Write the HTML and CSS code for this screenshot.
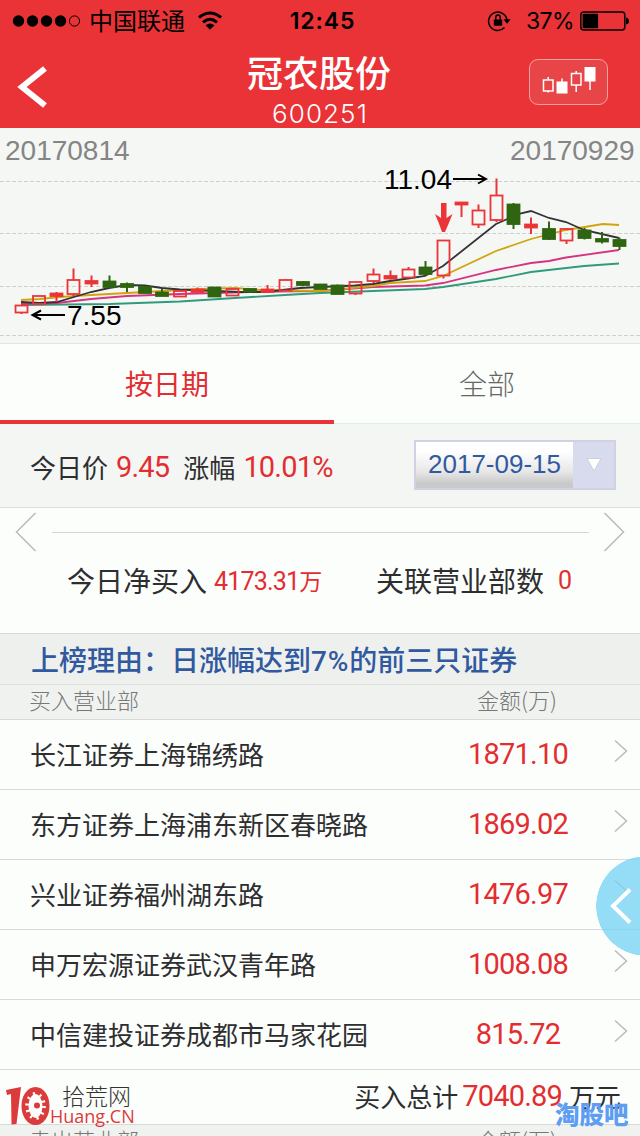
FILE: index.html
```html
<!DOCTYPE html>
<html lang="zh-CN">
  <head>
    <meta charset="UTF-8" />
    <meta name="viewport" content="width=device-width, initial-scale=1.0" />
    <title>冠农股份 600251</title>
    <link rel="stylesheet" href="styles.css">
  </head>
  <body>
    <header class="header">
      <div class="status-bar">
        <div class="carrier">
          <svg class="signal" width="70" height="14" viewBox="0 0 70 14">
            <circle cx="6.5" cy="7" r="5.7" />
            <circle cx="20.5" cy="7" r="5.7" />
            <circle cx="34.5" cy="7" r="5.7" />
            <circle cx="48.5" cy="7" r="5.7" />
            <circle class="empty" cx="62.5" cy="7" r="5.1" />
          </svg>
          <span>中国联通</span>
          <svg class="wifi" width="26" height="20" viewBox="0 0 26 20">
            <path d="M2 6.5 Q13 -2.5 24 6.5" />
            <path d="M6 11.3 Q13 5.3 20 11.3" />
            <path class="fill" d="M8.6 14.2 Q13 10.6 17.4 14.2 L13 18.7 Z" />
          </svg>
        </div>
        <span class="clock">12:45</span>
        <div class="power">
          <svg width="24" height="22" viewBox="0 0 24 22">
            <path class="ring" d="M17.5 17.6 A9.2 9.2 0 1 1 20 11" />
            <path d="M16.4 9.3 H23.6 L20 13.8 Z" />
            <rect x="6.8" y="9.5" width="8.4" height="6.3" rx="0.8" />
            <path class="ring" d="M8.7 10 V7.7 A2.3 2.6 0 0 1 13.3 7.7 V10" />
          </svg>
          <span class="percent">37%</span>
          <svg width="50" height="20" viewBox="0 0 50 20">
            <rect class="ring" x="0.8" y="1" width="44" height="18" rx="3" />
            <rect x="2.6" y="2.8" width="15.5" height="14.4" rx="1" />
            <path d="M46 6.5 Q49 7 49 10 Q49 13 46 13.5 Z" />
          </svg>
        </div>
      </div>
      <div class="title-bar">
        <svg class="back" width="32" height="44" viewBox="0 0 32 44">
          <path d="M29 4.5 L6 23 L29 41.5" />
        </svg>
        <div class="stock">
          <h1>冠农股份</h1>
          <p>600251</p>
        </div>
        <button class="kline-btn">
          <svg width="56" height="32" viewBox="0 0 56 32">
            <path d="M6.2 11 V14 M6.2 25 V26.5" />
            <rect class="hollow" x="1.5" y="14" width="9.5" height="11" />
            <path d="M20 12.5 V16" />
            <rect x="14.5" y="15.5" width="11" height="12" />
            <path d="M34.2 5 V8 M34.2 19 V26" />
            <rect class="hollow" x="29.5" y="7.5" width="9.5" height="11.5" />
            <path d="M48 14 V24" />
            <rect x="42.5" y="1" width="11" height="14.5" />
          </svg>
        </button>
      </div>
    </header>

    <section class="chart">
      <svg width="640" height="216" viewBox="0 128 640 216">
        <g class="grid">
          <path d="M0 181.5 H640" />
          <path d="M0 233.5 H640" />
          <path d="M0 286.5 H640" />
          <path d="M0 335.5 H640" />
        </g>
        <g class="averages">
          <polyline class="ma30" points="21,305 110,304 180,301.5 235,298 285,295 320,293 373,291 425,289 443,287 496,279 531,272 584,266 619,263.5" />
          <polyline class="ma20" points="21,304 57,303 91,299 127,296 180,294 250,292 320,291 373,287 425,285.5 443,283 496,270 531,263 549,261 566,257.5 619,250" />
          <polyline class="ma10" points="21,300 40,299 60,297 91,295 145,292 200,289 235,288 260,290 320,291 373,286 390,283 425,281 443,276 496,251 531,239 566,230 603,224 619,225" />
          <polyline class="ma5" points="21,302 39,303 57,302 74,297 91,292 109,288 127,285 145,285.5 162,288 180,289.5 240,292 265,292 300,288 320,287 355,285.5 373,284 390,281 408,278.5 425,276 443,266 496,224 520,213.5 531,211 549,218 566,222 584,230 619,238" />
        </g>
        <g id="candles"></g>
        <path class="marker" d="M441 203 H446.5 V218 L452.5 214 Q449 223 445 232 H442 Q439 223 435 214 L441 218 Z" />
        <g class="arrows">
          <path d="M453 179 H485 M478 174.5 L486 179 L478 183.5" />
          <path d="M65 315 H33 M41 310.5 L32.5 315 L41 319.5" />
        </g>
        <text class="date" x="5" y="160">20170814</text>
        <text class="date" x="510" y="160">20170929</text>
        <text class="value" x="384" y="189">11.04</text>
        <text class="value" x="67" y="325">7.55</text>
      </svg>
    </section>

    <nav class="tabs">
      <a class="tab active">按日期</a>
      <a class="tab">全部</a>
    </nav>

    <section class="today">
      <span>今日价</span>
      <span class="num price">9.45</span>
      <span>涨幅</span>
      <span class="num rate">10.01%</span>
      <div class="date-select">
        <span>2017-09-15</span>
        <i class="drop">
          <svg width="16" height="16" viewBox="0 0 16 16"><path d="M1 1.5 L8 14 L15 1.5 Z" /></svg>
        </i>
      </div>
    </section>

    <section class="summary">
      <div class="pager">
        <svg width="22" height="40" viewBox="0 0 22 40"><path d="M20.5 1 L1.5 20 L20.5 39" /></svg>
        <span class="rule"></span>
        <svg width="22" height="40" viewBox="0 0 22 40"><path d="M1.5 1 L20.5 20 L1.5 39" /></svg>
      </div>
      <div class="totals">
        <span>今日净买入</span>
        <span class="num net">4173.31<small>万</small></span>
        <span class="related">关联营业部数</span>
        <span class="num count">0</span>
      </div>
    </section>

    <h2 class="reason">上榜理由：日涨幅达到<b>7%</b>的前三只证券</h2>
    <div class="list-head">
      <span>买入营业部</span>
      <span class="amount">金额(万)</span>
    </div>
    <ul class="list" id="list"></ul>
    <div class="sum">
      <span>买入总计</span>
      <span class="num">7040.89</span>
      <span>万元</span>
    </div>
    <div class="list-head sell">
      <span>卖出营业部</span>
      <span class="amount">金额(万)</span>
    </div>

    <div class="side-btn">
      <svg width="24" height="38" viewBox="0 0 24 38"><path d="M21 2.5 L4 19 L21 35.5" /></svg>
    </div>

    <div class="site-mark">
      <svg width="44" height="40" viewBox="0 0 44 40">
        <path class="stem" d="M0 4 L15 1 L10.5 38 L5.5 38.5 L5 8 L1 9 Z" />
        <ellipse class="dial" cx="29.5" cy="20" rx="10.5" ry="15.5" />
        <ellipse class="ticks" cx="29.5" cy="20" rx="8.3" ry="12" />
        <circle class="hub" cx="31" cy="19.5" r="3" />
      </svg>
      <div class="site-name">
        <span>拾荒网</span>
        <b>Huang.CN</b>
      </div>
    </div>
    <div class="forum-mark">淘股吧</div>

    <script>
      // [x, wick top, body top, body bottom, wick bottom, type]
      // u = hollow red, r = solid red, d = green
      const candles = [
        [21.5, 305, 305.5, 312.5, 314, "u"],
        [39, 296, 296, 304, 304, "u"],
        [56.5, 292, 293.5, 296, 302, "r"],
        [73.5, 268.5, 280, 294, 296, "u"],
        [91.5, 275.5, 281, 283.5, 287, "r"],
        [109.5, 275.5, 281.5, 287, 287, "d"],
        [127, 282.5, 284, 287, 292, "d"],
        [145, 286, 287, 293, 293, "d"],
        [162, 289, 292.5, 296, 296, "d"],
        [180, 291, 291, 296.5, 297, "u"],
        [197.5, 287.5, 289.5, 292, 293, "r"],
        [214.5, 287, 287.5, 296.5, 297, "d"],
        [232.5, 289, 289, 295.5, 296, "u"],
        [250, 288.5, 289, 291.5, 293, "d"],
        [267.5, 285, 289.5, 292, 293, "r"],
        [285.5, 279, 280, 290.5, 291, "u"],
        [303, 281, 282, 285, 286, "d"],
        [320.5, 284, 284.5, 289, 289, "d"],
        [337.5, 284.5, 285.5, 294, 294, "d"],
        [355.5, 282, 282, 293.5, 295, "u"],
        [373.5, 268.5, 274.5, 281, 283, "u"],
        [390.5, 270.5, 276, 278.5, 279.5, "r"],
        [408.5, 267, 269.5, 277.5, 278, "u"],
        [425.5, 261, 267.5, 274, 275.5, "d"],
        [443.5, 240, 240.5, 275.5, 278.5, "u"],
        [461.5, 202.5, 202.5, 204.5, 217, "r"],
        [478.5, 204.5, 210.5, 224.5, 228, "u"],
        [496.5, 178.5, 195.5, 220, 222, "u"],
        [513.5, 203, 204.5, 224, 229, "d"],
        [531, 217.5, 224.5, 227.5, 234, "r"],
        [549, 221.5, 229, 239, 240, "d"],
        [566.5, 228, 229, 240.5, 244, "u"],
        [584.5, 228, 230.5, 238, 239.5, "d"],
        [602, 232, 239, 241.5, 243.5, "d"],
        [619.5, 237.5, 240, 246, 250, "d"],
      ];

      document.getElementById("candles").innerHTML = candles
        .map(([x, high, top, bottom, low, type]) => {
          return `<path class="wick ${type}" d="M${x} ${high} V${top} M${x} ${bottom} V${low}" />
            <rect class="body ${type}" x="${x - 6}" y="${top}" width="12" height="${bottom - top}" />`;
        })
        .join("");

      const branches = [
        { name: "长江证券上海锦绣路", amount: "1871.10" },
        { name: "东方证券上海浦东新区春晓路", amount: "1869.02" },
        { name: "兴业证券福州湖东路", amount: "1476.97" },
        { name: "申万宏源证券武汉青年路", amount: "1008.08" },
        { name: "中信建投证券成都市马家花园", amount: "815.72" },
      ];

      document.getElementById("list").innerHTML = branches
        .map(
          (item) => `<li>
            <span>${item.name}</span>
            <span class="num">${item.amount}</span>
            <svg width="14" height="24" viewBox="0 0 14 24"><path d="M1 1.5 L12.5 12 L1 22.5" /></svg>
          </li>`
        )
        .join("");
    </script>
  </body>
</html>
```

FILE: styles.css
```css
* {
  box-sizing: border-box;
}
body {
  position: relative;
  width: 640px;
  height: 1136px;
  margin: 0;
  overflow: hidden;
  background: #fcfefc;
  color: #2e2e30;
  font-family: "Noto Sans CJK SC", sans-serif;
  font-size: 26px;
  font-weight: 400;
}
h1,
h2,
p,
ul {
  margin: 0;
  padding: 0;
}
svg {
  display: block;
  flex: none;
}
.num {
  font-family: Roboto, "Noto Sans CJK SC", sans-serif;
  font-weight: 400;
  font-size: 29px;
  letter-spacing: -0.8px;
  color: #e32d31;
}

/* header */
.header {
  height: 128px;
  background: #e93337;
}
.status-bar {
  display: grid;
  grid-template-columns: 1fr 72px 1fr;
  align-items: center;
  height: 41px;
  padding: 0 10px 0 12px;
  color: #000;
}
.carrier,
.power {
  display: flex;
  align-items: center;
}
.carrier span {
  margin: -2px 12px 0 7px;
  font-size: 24px;
  line-height: 40px;
}
.signal .empty {
  fill: none;
  stroke: #000;
}
.wifi path {
  fill: none;
  stroke: #000;
  stroke-width: 3;
}
.wifi .fill {
  fill: #000;
  stroke: none;
}
.clock {
  font-family: Inter, sans-serif;
  font-size: 23px;
  font-weight: 600;
  text-align: center;
  letter-spacing: 0.9px;
  padding-left: 3px;
}
.power {
  justify-content: flex-end;
}
.power svg:first-child {
  margin-right: 15px;
}
.percent {
  margin-right: 6px;
  font-family: Inter, sans-serif;
  font-size: 23px;
  font-weight: 400;
  letter-spacing: -0.6px;
}
.power .ring {
  fill: none;
  stroke: #000;
  stroke-width: 1.5;
}
.title-bar {
  display: flex;
  justify-content: space-between;
  height: 87px;
  padding: 0 32px 0 16px;
  color: #fff;
}
.back {
  margin-top: 23px;
}
.back path {
  fill: none;
  stroke: #fff;
  stroke-width: 6;
}
.stock {
  margin-left: 61px;
  text-align: center;
}
.stock h1 {
  font-size: 36px;
  font-weight: 500;
  line-height: 61px;
}
.stock p {
  margin-top: -4px;
  font-family: Inter, sans-serif;
  font-size: 26px;
  font-weight: 300;
  line-height: 31px;
  letter-spacing: 1.1px;
  padding-left: 2px;
}
.kline-btn {
  width: 79px;
  height: 46px;
  margin-top: 18px;
  padding: 0 0 0 12px;
  border: 1px solid #f5a0a0;
  border-radius: 9px;
  background: #e84549;
}
.kline-btn path,
.kline-btn .hollow {
  fill: none;
  stroke: #fff;
  stroke-width: 1.5;
}
.kline-btn rect {
  fill: #fff;
}

/* chart */
.chart {
  height: 216px;
  background: #f5f7f5;
  border-bottom: 1px solid #e2e4e2;
}
.grid path {
  stroke: #cfd1cf;
  stroke-dasharray: 4 2;
}
.wick {
  stroke: #ec3438;
  stroke-width: 2;
}
.body {
  fill: none;
  stroke: #ec3438;
  stroke-width: 1.8;
}
.body.r {
  fill: #ec3438;
}
.wick.d {
  stroke: #2f6410;
}
.body.d {
  fill: #2f6410;
  stroke: #2f6410;
}
.averages polyline {
  fill: none;
  stroke-width: 1.8;
}
.averages .ma5 {
  stroke: #333336;
}
.averages .ma10 {
  stroke: #d2a40c;
}
.averages .ma20 {
  stroke: #d63480;
}
.averages .ma30 {
  stroke: #329a7c;
}
.marker {
  fill: #ec3438;
}
.arrows path {
  fill: none;
  stroke: #000;
  stroke-width: 2;
}
.chart text {
  font-family: "Liberation Sans", Arial, sans-serif;
  font-size: 28px;
}
.chart .date {
  fill: #858585;
}

/* tabs */
.tabs {
  display: flex;
  height: 80px;
  border-bottom: 1px solid #dcefee;
}
.tab {
  width: 306px;
  height: 80px;
  font-size: 28px;
  font-weight: 300;
  line-height: 78px;
  text-align: center;
  color: #666;
}
.tab.active {
  width: 334px;
  font-weight: 400;
  color: #e32d31;
  border-bottom: 4px solid #e93337;
}

/* today's price */
.today {
  display: flex;
  align-items: center;
  height: 84px;
  padding: 2px 24px 0 30px;
  background: #f3f6f3;
  border-bottom: 1px solid #dcdedc;
}
.price {
  margin: 0 14px 0 8px;
}
.rate {
  margin-left: 8px;
}
.date-select {
  display: flex;
  width: 202px;
  height: 50px;
  margin: -4px 0 0 auto;
  border: 2px solid #d0d2e4;
  font-family: "Liberation Sans", Arial, sans-serif;
  line-height: 45px;
  color: #3159a0;
}
.date-select span {
  flex: 1;
  padding-left: 12px;
  background: linear-gradient(#fff 20%, #e6e7e6 65%, #c8c9c8 90%);
}
.drop {
  display: grid;
  place-items: center;
  width: 41px;
  background: #d8dbed;
}
.drop path {
  fill: #fff;
  stroke: #cccfd4;
}

/* summary */
.summary {
  height: 125px;
}
.pager {
  display: flex;
  align-items: center;
  justify-content: space-between;
  height: 48px;
  padding: 0 15px;
}
.pager path,
.list path {
  fill: none;
  stroke: #b9bbb9;
  stroke-width: 1.5;
}
.rule {
  width: 537px;
  border-top: 1px solid #d4d6d4;
}
.totals {
  display: flex;
  align-items: center;
  height: 48px;
  padding-left: 67px;
  font-size: 28px;
}
.net {
  width: 110px;
  margin-left: 7px;
  font-size: 25px;
}
.net small {
  font-size: 23px;
}
.related {
  margin-left: 52px;
}
.count {
  margin-left: 14px;
  font-size: 25px;
}

/* branch list */
.reason {
  height: 52px;
  padding-left: 31px;
  background: #eef0ee;
  border-top: 1px solid #d8dad8;
  border-bottom: 1px solid #dfe1df;
  font-size: 28px;
  font-weight: 500;
  line-height: 50px;
  color: #3159a0;
  white-space: nowrap;
}
.reason b {
  font-family: Roboto, sans-serif;
  font-weight: 500;
  letter-spacing: 0.8px;
}
.list-head {
  display: flex;
  height: 35px;
  padding-left: 29px;
  background: #f0f2f0;
  border-bottom: 1px solid #d8dad8;
  font-size: 22px;
  font-weight: 300;
  line-height: 28px;
  color: #777;
}
.list-head .amount {
  width: 81px;
  margin-left: 338px;
}
.sell {
  height: 12px;
}
.list {
  list-style: none;
}
.list li {
  display: flex;
  align-items: center;
  height: 70px;
  padding: 0 12px 2px 30px;
  border-bottom: 1px solid #d8dad8;
}
.list .num {
  width: 100px;
  margin-left: auto;
  text-align: center;
}
.list svg {
  margin: -6px 0 0 46px;
}
.sum {
  display: flex;
  align-items: center;
  justify-content: flex-end;
  height: 55px;
  padding: 0 19px 3px 0;
  border-bottom: 1px solid #d8dad8;
}
.sum .num {
  margin: 0 7px 0 4px;
}

/* things floating over the page */
.side-btn {
  position: absolute;
  top: 856px;
  right: 0;
  width: 44px;
  height: 100px;
  overflow: hidden;
  padding: 31px 0 0 13px;
  background: radial-gradient(circle at 50px 50px, rgba(120, 212, 244, 0.78) 49.5px, transparent 50px);
}
.side-btn path {
  fill: none;
  stroke: #fff;
  stroke-width: 4;
}
.site-mark {
  position: absolute;
  top: 1086px;
  left: 6px;
  display: flex;
}
.stem,
.hub {
  fill: #dc3b3b;
}
.dial {
  fill: #fcfefc;
  stroke: #dc3b3b;
  stroke-width: 7;
}
.ticks {
  fill: none;
  stroke: #fcfefc;
  stroke-width: 4;
  stroke-dasharray: 2 4.5;
}
.site-name {
  display: flex;
  flex-direction: column;
}
.site-name span {
  margin-left: 12px;
  font-size: 23px;
  font-weight: 300;
  line-height: 18px;
  color: #333;
}
.site-name b {
  font-family: "Open Sans", sans-serif;
  font-size: 18px;
  font-weight: 500;
  line-height: 24px;
  color: #dc3b3b;
}
.forum-mark {
  position: absolute;
  top: 1101px;
  left: 555px;
  font-size: 24.5px;
  font-weight: 900;
  line-height: 25px;
  color: #5e9df2;
}
```
